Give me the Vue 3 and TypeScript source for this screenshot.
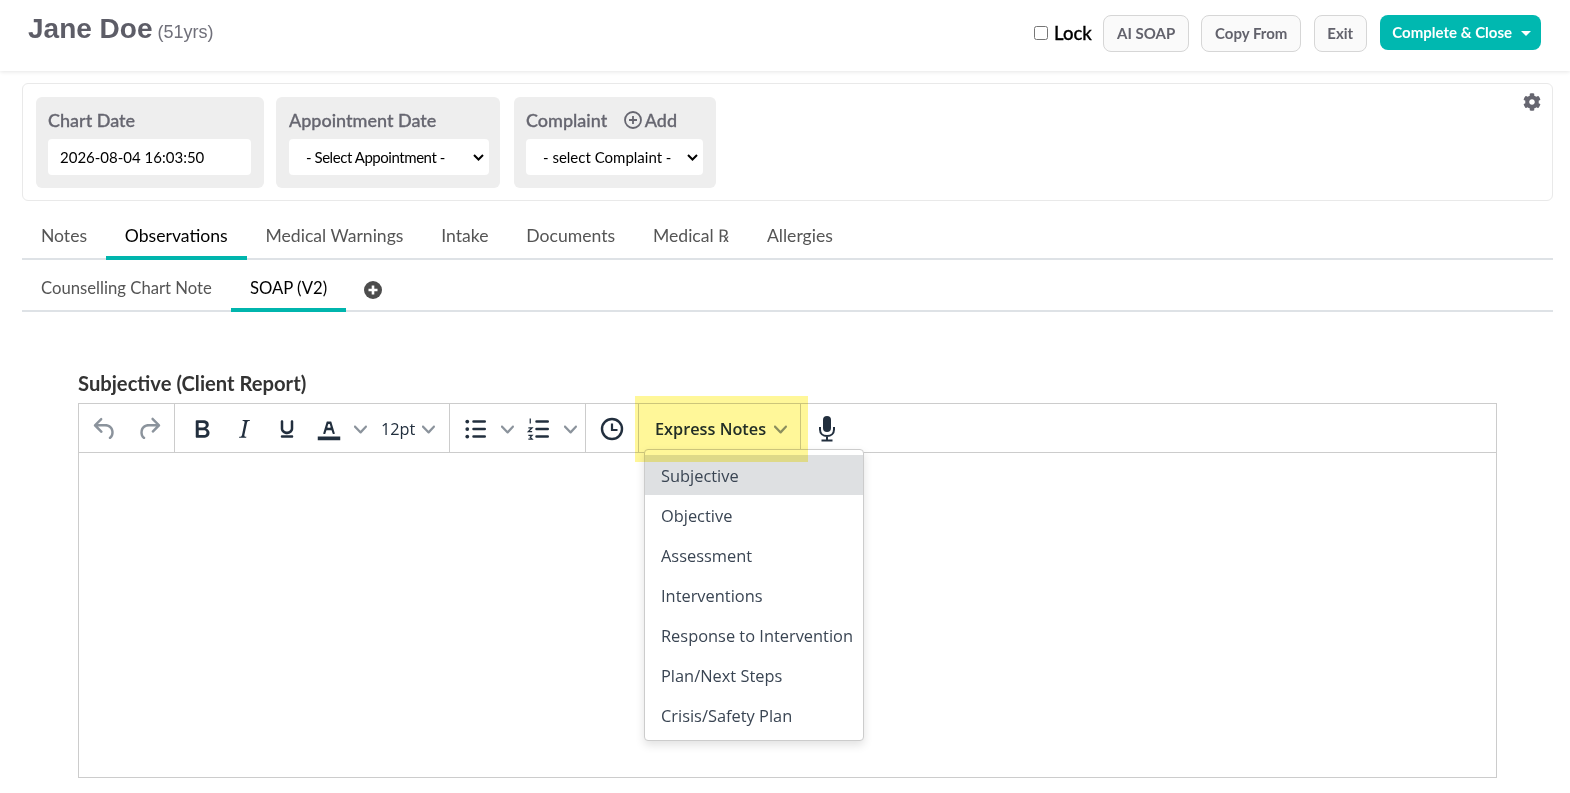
<script setup lang="ts">
const mainTabs = ["Notes", "Observations", "Medical Warnings", "Intake", "Documents", "Medical ℞", "Allergies"];
const expressNotes = [
  "Subjective",
  "Objective",
  "Assessment",
  "Interventions",
  "Response to Intervention",
  "Plan/Next Steps",
  "Crisis/Safety Plan",
];
const chevron =
  "M8.7 2.2c.3-.3.8-.3 1 0 .4.4.4.9 0 1.2L5.7 7.8c-.3.3-.9.3-1.2 0L.2 3.4a.8.8 0 0 1 0-1.2c.3-.3.8-.3 1.1 0L5 6l3.7-3.8Z";
</script>

<template>
  <div class="page">
    <header class="top">
      <div class="who">
        <span class="name">Jane Doe</span>
        <span class="age">(51yrs)</span>
      </div>
      <div class="actions">
        <label class="lock"><input type="checkbox" />Lock</label>
        <button class="btn">AI SOAP</button>
        <button class="btn">Copy From</button>
        <button class="btn">Exit</button>
        <button class="btn primary">Complete &amp; Close<span class="caret"></span></button>
      </div>
    </header>

    <main class="content">
      <section class="card">
        <div class="field f1">
          <div class="flabel">Chart Date</div>
          <input class="finput" value="2026-08-04 16:03:50" />
        </div>
        <div class="field f2">
          <div class="flabel">Appointment Date</div>
          <select class="finput sel tight"><option>- Select Appointment -</option></select>
        </div>
        <div class="field f3">
          <div class="flabel">
            Complaint
            <span class="add">
              <svg width="18" height="18" viewBox="0 0 18 18" fill="none" stroke="#666670" stroke-width="1.8">
                <circle cx="9" cy="9" r="8" />
                <path d="M9 5v8M5 9h8" />
              </svg>
              Add
            </span>
          </div>
          <select class="finput sel"><option>- select Complaint -</option></select>
        </div>
        <svg class="gear" width="18" height="18" viewBox="0 0 512 512" fill="#666670">
          <path d="M487.4 315.7l-42.6-24.6c4.3-23.2 4.3-47 0-70.2l42.6-24.6c4.9-2.8 7.1-8.6 5.5-14-11.1-35.6-30-67.8-54.7-94.6-3.8-4.1-10-5.1-14.8-2.3L380.8 110c-17.9-15.4-38.5-27.3-60.8-35.1V25.8c0-5.6-3.9-10.5-9.4-11.7-36.7-8.2-74.3-7.8-109.2 0-5.5 1.2-9.4 6.1-9.4 11.7V75c-22.2 7.9-42.8 19.8-60.8 35.1L88.7 85.5c-4.9-2.8-11-1.9-14.8 2.3-24.7 26.7-43.6 58.9-54.7 94.6-1.7 5.4.6 11.2 5.5 14L67.3 221c-4.3 23.2-4.3 47 0 70.2l-42.6 24.6c-4.9 2.8-7.1 8.6-5.5 14 11.1 35.6 30 67.8 54.7 94.6 3.8 4.1 10 5.1 14.8 2.3l42.6-24.6c17.9 15.4 38.5 27.3 60.8 35.1v49.2c0 5.6 3.9 10.5 9.4 11.7 36.7 8.2 74.3 7.8 109.2 0 5.5-1.2 9.4-6.1 9.4-11.7v-49.2c22.2-7.9 42.8-19.8 60.8-35.1l42.6 24.6c4.9 2.8 11 1.9 14.8-2.3 24.7-26.7 43.6-58.9 54.7-94.6 1.5-5.5-.7-11.3-5.6-14.1zM256 336c-44.1 0-80-35.9-80-80s35.9-80 80-80 80 35.9 80 80-35.9 80-80 80z" />
        </svg>
      </section>

      <nav class="tabs">
        <a v-for="t in mainTabs" :key="t" class="tab" :class="{ on: t === 'Observations' }">{{ t }}</a>
      </nav>

      <nav class="tabs sub">
        <a class="tab">Counselling Chart Note</a>
        <a class="tab on">SOAP (V2)</a>
        <svg class="plus" width="18" height="18" viewBox="0 0 18 18">
          <circle cx="9" cy="9" r="9" fill="#4d4d4d" />
          <path d="M9 4.500v9M4.500 9h9" stroke="#fff" stroke-width="2.6" />
        </svg>
      </nav>

      <section class="soap">
        <h3 class="slabel">Subjective (Client Report)</h3>
        <div class="editor">
          <div class="toolbar">
            <div class="group g1">
              <button class="tb w44 dim">
                <svg width="30" height="30" viewBox="0 0 24 24"><path d="M6.4 8H12c3.7 0 6.2 2 6.8 5.1.6 2.7-.4 5.6-2.3 6.8a1 1 0 0 1-1-1.8c1.1-.6 1.8-2.7 1.4-4.6-.5-2.1-2.1-3.5-4.9-3.5H6.4l3.3 3.3a1 1 0 1 1-1.4 1.4l-5-5a1 1 0 0 1 0-1.4l5-5a1 1 0 0 1 1.4 1.4L6.4 8Z" /></svg>
              </button>
              <button class="tb w44 dim">
                <svg width="30" height="30" viewBox="0 0 24 24"><path d="M17.6 10H12c-2.8 0-4.400 1.4-4.900 3.5-.4 2 .3 4 1.400 4.600a1 1 0 1 1-1 1.800c-2-1.200-2.900-4.100-2.300-6.800.6-3 3-5.100 6.800-5.100h5.600l-3.300-3.300a1 1 0 1 1 1.400-1.400l5 5a1 1 0 0 1 0 1.400l-5 5a1 1 0 0 1-1.400-1.400l3.300-3.300Z" /></svg>
              </button>
            </div>
            <div class="group g2">
              <button class="tb w42">
                <svg width="30" height="30" viewBox="0 0 24 24"><path d="M7.8 19c-.3 0-.5 0-.6-.2l-.2-.5V5.7c0-.2 0-.4.2-.5l.6-.2h5c1.500 0 2.700.3 3.500 1 .7.6 1.100 1.400 1.100 2.500a3 3 0 0 1-.6 1.900c-.4.6-1 1-1.600 1.200.4.1.9.3 1.300.6s.8.7 1 1.200c.4.4.5 1 .5 1.600 0 1.300-.4 2.300-1.300 3-.8.7-2.100 1-3.800 1H7.800Zm5-8.300c.6 0 1.200-.1 1.600-.5.4-.3.6-.7.6-1.300 0-1.100-.8-1.700-2.300-1.700H9.300v3.500h3.400Zm.5 6c.7 0 1.300-.1 1.700-.4.4-.4.6-.9.6-1.500s-.2-1-.7-1.400c-.4-.3-1-.4-2-.4H9.400v3.800h4Z" /></svg>
              </button>
              <button class="tb w42">
                <svg width="30" height="30" viewBox="0 0 24 24"><path d="m16.7 4.700-.1.900h-.3c-.6 0-1 0-1.400.3-.3.3-.4.6-.5 1.100l-2.100 9.800v.6c0 .5.4.8 1.400.8h.2l-.2.8H8l.2-.8h.2c1.100 0 1.800-.5 2-1.500l2-9.800.1-.5c0-.6-.4-.8-1.400-.8h-.3l.2-.9h5.800Z" /></svg>
              </button>
              <button class="tb w43">
                <svg width="30" height="30" viewBox="0 0 24 24"><path d="M16 5c.6 0 1 .4 1 1v5.500a4 4 0 0 1-.4 1.800l-1 1.400a5.300 5.300 0 0 1-5.500 1 5 5 0 0 1-1.600-1c-.5-.4-.8-.9-1.100-1.400a4 4 0 0 1-.4-1.800V6c0-.6.4-1 1-1s1 .4 1 1v5.500c0 .3 0 .6.2 1l.6.7a3.300 3.300 0 0 0 2.200.8 3.400 3.400 0 0 0 2.200-.8c.3-.2.4-.5.6-.8l.2-.9V6c0-.6.4-1 1-1ZM8 17h8c.6 0 1 .4 1 1s-.4 1-1 1H8a1 1 0 0 1 0-2Z" /></svg>
              </button>
              <button class="tb w42">
                <svg width="30" height="30" viewBox="0 0 24 24"><path d="M3 18h18v3H3z" /><path d="M8.700 16h-.8a.5.5 0 0 1-.5-.6l2.700-9c.1-.3.3-.4.5-.4h2.800c.2 0 .4.1.5.4l2.700 9a.5.5 0 0 1-.5.6h-.8a.5.5 0 0 1-.4-.4l-.7-2.200c0-.3-.3-.4-.5-.4h-3.400c-.2 0-.4.1-.5.4l-.7 2.200c0 .3-.2.4-.4.4Zm2.600-7.600-.6 2a.5.5 0 0 0 .5.6h1.600a.5.5 0 0 0 .5-.6l-.6-2c0-.3-.3-.4-.5-.4h-.4c-.2 0-.4.1-.5.4Z" fill-rule="evenodd" /></svg>
              </button>
              <span class="chev cw"><svg width="13" height="13" viewBox="0 0 10 10"><path :d="chevron" /></svg></span>
              <button class="tb size">12pt<svg class="drop" width="13" height="13" viewBox="0 0 10 10"><path :d="chevron" /></svg></button>
            </div>
            <div class="group g3">
              <button class="tb w30">
                <svg width="30" height="30" viewBox="0 0 24 24">
                  <path d="M10 5h9a1 1 0 0 1 0 2h-9a1 1 0 0 1 0-2Zm0 6h9a1 1 0 0 1 0 2h-9a1 1 0 0 1 0-2Zm0 6h9a1 1 0 0 1 0 2h-9a1 1 0 0 1 0-2Z" />
                  <circle cx="5" cy="6" r="1.500" /><circle cx="5" cy="12" r="1.500" /><circle cx="5" cy="18" r="1.500" />
                </svg>
              </button>
              <span class="chev c1"><svg width="13" height="13" viewBox="0 0 10 10"><path :d="chevron" /></svg></span>
              <button class="tb w30 num">
                <svg width="30" height="30" viewBox="0 0 24 24">
                  <path d="M10 5h9a1 1 0 0 1 0 2h-9a1 1 0 0 1 0-2Zm0 6h9a1 1 0 0 1 0 2h-9a1 1 0 0 1 0-2Zm0 6h9a1 1 0 0 1 0 2h-9a1 1 0 0 1 0-2Z" />
                  <path d="M5 3.500v4M3.500 11h3l-3 3h3M3.500 17h3l-1.500 1.500 1.500 1.500h-3" fill="none" stroke="#222f3e" stroke-width="1" />
                </svg>
              </button>
              <span class="chev c1"><svg width="13" height="13" viewBox="0 0 10 10"><path :d="chevron" /></svg></span>
            </div>
            <div class="group g4">
              <button class="tb clock">
                <svg width="26" height="26" viewBox="0 0 26 26" fill="none" stroke="#222f3e">
                  <circle cx="13" cy="13" r="10" stroke-width="2.400" />
                  <path d="M13 7.500V14h5.500" stroke-width="2.200" />
                </svg>
              </button>
            </div>
            <div class="group g5">
              <button class="tb express">Express Notes<svg class="drop" width="13" height="13" viewBox="0 0 10 10"><path :d="chevron" /></svg></button>
            </div>
            <button class="tb mic">
              <svg width="20" height="28" viewBox="0 0 20 28" fill="none" stroke="#222f3e" stroke-width="2">
                <rect x="6" y="1" width="8" height="16" rx="4" fill="#222f3e" stroke="none" />
                <path d="M3 12v2.500c0 4 3 6.500 7 6.500s7-2.500 7-6.500V12M10 21v4M4.500 25.500h11" />
              </svg>
            </button>
          </div>
          <div class="body"></div>

          <ul class="menu">
            <li v-for="(n, i) in expressNotes" :key="n" :class="{ hover: i === 0 }">{{ n }}</li>
          </ul>
          <div class="marker"></div>
        </div>
      </section>
    </main>
  </div>
</template>

<style scoped>
.page {
  height: 793px;
  overflow: hidden;
  background: #fff;
  font-family: Lato, "Liberation Sans", sans-serif;
}

.top {
  height: 71px;
  box-sizing: border-box;
  padding: 15px 29px 0 28px;
  display: flex;
  justify-content: space-between;
  align-items: flex-start;
  box-shadow: 0 1px 4px rgba(0, 0, 0, 0.1);
}
.who {
  font-family: "Liberation Sans", Arial, sans-serif;
  color: #5d5d67;
  margin-top: -2px;
}
.name {
  font-size: 28px;
  font-weight: 700;
}
.age {
  font-size: 18px;
  color: #70707a;
  margin-left: 5px;
}
.actions {
  display: flex;
  align-items: flex-start;
  gap: 12.5px;
}
.lock {
  display: flex;
  align-items: center;
  font-size: 18.5px;
  font-weight: 500;
  color: #000;
  height: 35px;
  margin-right: -1px;
  -webkit-text-stroke: 0.3px #000;
}
.lock input {
  width: 14px;
  height: 14px;
  margin: 0 6px 0 0;
}
.btn {
  height: 37px;
  padding: 0 12.7px 2px;
  font-family: inherit;
  font-size: 15px;
  font-weight: 700;
  color: #62626c;
  background: #fafafa;
  border: 1px solid #d6d6d6;
  border-radius: 8px;
}
.btn.primary {
  height: 35px;
  margin-left: 1px;
  padding: 0 10px 1px 12px;
  color: #fff;
  background: #00b8b0;
  border: none;
}
.caret {
  display: inline-block;
  margin-left: 9px;
  vertical-align: 2px;
  border-top: 5px solid #fff;
  border-left: 5px solid transparent;
  border-right: 5px solid transparent;
}

.content {
  padding: 12px 17px 0 22px;
}
.card {
  position: relative;
  height: 118px;
  box-sizing: border-box;
  padding: 13px;
  display: flex;
  gap: 12px;
  border: 1px solid #e9e9e9;
  border-radius: 6px;
}
.gear {
  position: absolute;
  top: 9px;
  right: 11px;
}
.field {
  box-sizing: border-box;
  height: 91px;
  padding: 12px;
  background: #eee;
  border-radius: 6px;
}
.f1 { width: 228px; padding-right: 13px; }
.f2 { width: 224px; padding-left: 13px; padding-right: 11px; }
.f3 { width: 202px; margin-left: 2px; padding-right: 13px; }
.flabel {
  height: 30px;
  font-size: 18px;
  font-weight: 500;
  line-height: 22px;
  color: #666670;
  white-space: nowrap;
  -webkit-text-stroke: 0.3px #666670;
}
.add {
  margin-left: 12px;
  display: inline-flex;
  align-items: center;
  gap: 3px;
  vertical-align: top;
}
.finput {
  display: block;
  box-sizing: border-box;
  width: 100%;
  height: 36px;
  padding: 0 12px;
  font-family: inherit;
  font-size: 15px;
  color: #000;
  background: #fff;
  border: none;
  border-radius: 4px;
  outline: none;
}
.sel {
  appearance: none;
  padding: 0 0 0 17px;
  background: #fff url("data:image/svg+xml,%3Csvg xmlns='http://www.w3.org/2000/svg' width='11' height='7'%3E%3Cpath d='M1 1l4.500 4.500L10 1' fill='none' stroke='%23000' stroke-width='2'/%3E%3C/svg%3E") no-repeat right 5px center;
}
.tight {
  letter-spacing: -0.45px;
}

.tabs {
  display: flex;
  align-items: flex-end;
  height: 59px;
  box-sizing: border-box;
  border-bottom: 2px solid #dee2e6;
}
.tab {
  padding: 0 18.9px;
  height: 38px;
  box-sizing: border-box;
  margin-bottom: -2px;
  line-height: 28px;
  font-size: 17.6px;
  color: #555;
  white-space: nowrap;
}
.tab.on {
  color: #000;
  border-bottom: 4px solid #00b5ad;
}
.sub {
  height: 52px;
}
.sub .tab {
  height: 40px;
  padding: 0 19px;
  line-height: 32px;
  font-size: 16.7px;
}
.plus {
  margin: 0 0 11px 18px;
  align-self: flex-end;
}

.soap {
  padding: 59px 56px 0;
}
.slabel {
  margin: 0 0 8px;
  font-size: 20.2px;
  line-height: 24px;
  font-weight: 700;
  color: #333;
}
.editor {
  position: relative;
  height: 375px;
  box-sizing: border-box;
  border: 1px solid #ccc;
  display: flex;
  flex-direction: column;
  font-family: "Open Sans", "Noto Sans", sans-serif;
}
.toolbar {
  display: flex;
  height: 48px;
  flex: none;
  border-bottom: 1px solid #ccc;
}
.group {
  display: flex;
  align-items: center;
  box-sizing: border-box;
  border-right: 1px solid #ccc;
}
.g1 { width: 96px; padding-left: 4px; }
.g2 { width: 275px; padding-left: 6px; }
.g3 { width: 136px; padding-left: 11px; }
.g4 { width: 53px; justify-content: center; }
.g5 { width: 162px; }
.tb {
  display: flex;
  align-items: center;
  justify-content: center;
  flex: none;
  height: 40px;
  margin-top: 2px;
  padding: 0;
  background: none;
  border: none;
  color: #222f3e;
  font-family: inherit;
}
.tb svg { fill: #222f3e; }
.tb.clock svg, .tb.mic svg { fill: none; }
.w44 { width: 44px; }
.w43 { width: 43px; }
.w42 { width: 42px; }
.w30 { width: 30px; }
.dim svg { fill: #8b939c; }
.chev {
  display: flex;
  align-items: center;
  flex: none;
  margin-top: 2px;
}
.chev svg { fill: #8b939c; }
.chev.cw { margin-left: 4px; }
.chev.c1 { margin-left: 10px; margin-right: 10px; }
.num + .chev.c1 { margin-left: 10px; }
.size {
  margin-left: 14px;
  font-size: 16.3px;
}
.size .drop {
  fill: #8b939c;
  margin-left: 7px;
}
.express .drop {
  fill: #8b939c;
  margin-left: 8px;
}
.express {
  width: 100%;
  justify-content: flex-start;
  padding-left: 16px;
  box-sizing: border-box;
  font-size: 16.3px;
  font-weight: 600;
  white-space: nowrap;
}
.mic {
  width: 52px;
  align-self: center;
}
.body { flex: 1; }

.menu {
  position: absolute;
  left: 565px;
  top: 45px;
  z-index: 2;
  width: 220px;
  box-sizing: border-box;
  margin: 0;
  padding: 5px 0 5px;
  list-style: none;
  background: #fff;
  border: 1px solid #ccc;
  border-radius: 4px;
  box-shadow: 0 4px 10px rgba(0, 0, 0, 0.12);
}
.menu li {
  height: 40px;
  line-height: 42px;
  padding-left: 16px;
  font-size: 16.4px;
  color: #3a4553;
  white-space: nowrap;
}
.menu li.hover {
  background: #dee0e2;
}
.marker {
  position: absolute;
  left: 556px;
  top: -8px;
  z-index: 3;
  width: 173px;
  height: 66px;
  background: #fff799;
  mix-blend-mode: multiply;
  pointer-events: none;
}
</style>
